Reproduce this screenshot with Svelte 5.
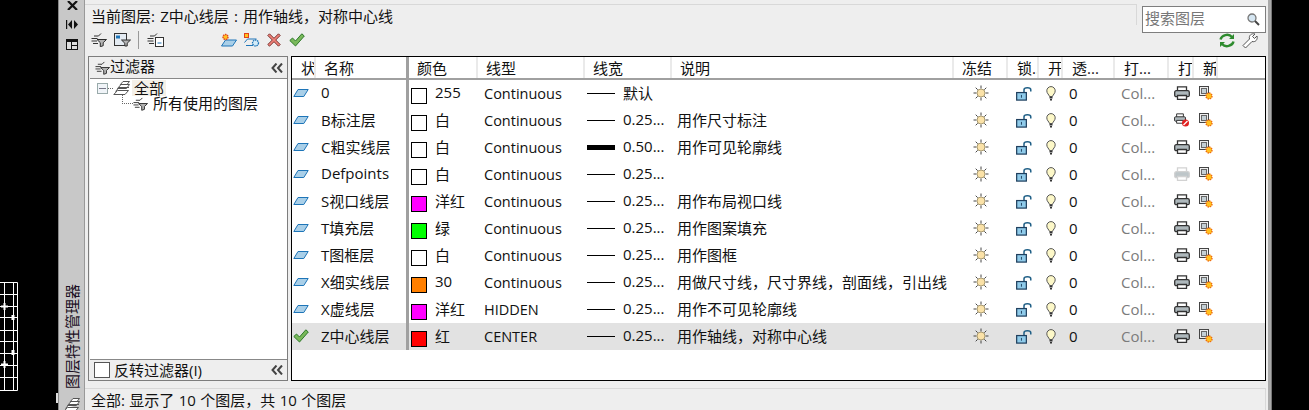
<script lang="ts">
  type Layer = {
    name: string;
    swatch: string;
    color: string;
    linetype: string;
    weight: string;
    thick?: boolean;
    desc: string;
    print?: "on" | "off" | "faded";
    active?: boolean;
  };

  const layers: Layer[] = [
    { name: "0", swatch: "#fff", color: "255", linetype: "Continuous", weight: "默认", desc: "" },
    { name: "B标注层", swatch: "#fff", color: "白", linetype: "Continuous", weight: "0.25...", desc: "用作尺寸标注", print: "off" },
    { name: "C粗实线层", swatch: "#fff", color: "白", linetype: "Continuous", weight: "0.50...", thick: true, desc: "用作可见轮廓线" },
    { name: "Defpoints", swatch: "#fff", color: "白", linetype: "Continuous", weight: "0.25...", desc: "", print: "faded" },
    { name: "S视口线层", swatch: "#ff00ff", color: "洋红", linetype: "Continuous", weight: "0.25...", desc: "用作布局视口线" },
    { name: "T填充层", swatch: "#00ff00", color: "绿", linetype: "Continuous", weight: "0.25...", desc: "用作图案填充" },
    { name: "T图框层", swatch: "#fff", color: "白", linetype: "Continuous", weight: "0.25...", desc: "用作图框" },
    { name: "X细实线层", swatch: "#ff7f00", color: "30", linetype: "Continuous", weight: "0.25...", desc: "用做尺寸线，尺寸界线，剖面线，引出线" },
    { name: "X虚线层", swatch: "#ff00ff", color: "洋红", linetype: "HIDDEN", weight: "0.25...", desc: "用作不可见轮廓线" },
    { name: "Z中心线层", swatch: "#ff0000", color: "红", linetype: "CENTER", weight: "0.25...", desc: "用作轴线，对称中心线", active: true },
  ];

  const headers = ["状", "名称", "颜色", "线型", "线宽", "说明", "冻结", "锁..", "开", "透...", "打...", "打", "新"];
</script>

<svg class="defs" width="0" height="0" aria-hidden="true">
  <symbol id="filter" viewBox="0 0 16 14">
    <path d="M.5 5.500h6M3 3h4.500l2.500-2.500M.5 8h5.500M2 10.500h5" fill="none" stroke="#333" />
    <path d="M6 6.500h9.500l-3.300 3.200v3l-2.900 1v-4z" fill="#b4b4b4" stroke="#2c2c2c" />
  </symbol>
  <symbol id="stack" viewBox="0 0 17 14">
    <path d="M.8 13.500 4.500 9.500h11l-3.500 4zM2.500 10.500l3.500-4h10M4.500 7.500 8 3.500h8.500l-3 4zM7 4l3-3.500h6.500l-2.500 3" fill="#fff" stroke="#555" />
  </symbol>
  <symbol id="layer" viewBox="0 0 16 8">
    <path d="M.8 7.500 5 .5h10.200l-4.400 7z" fill="#a9cfe8" stroke="#1e75b8" />
  </symbol>
  <symbol id="check" viewBox="0 0 16 14">
    <path d="M.8 7.500 3.500 5l3 3L12.800.8 15.300 3 6.500 13z" fill="#79b85a" stroke="#2e7a2b" />
  </symbol>
  <symbol id="sun" viewBox="0 0 16 16">
    <path d="M8 .5v3M8 12.500v3M.5 8h3M12.500 8h3M2.700 2.700l2 2M11.300 11.300l2 2M2.700 13.300l2-2M11.300 4.700l2-2" stroke="#444" />
    <circle cx="8" cy="8" r="4" fill="#fbe2a8" stroke="#a89a72" />
  </symbol>
  <symbol id="lock" viewBox="0 0 17 15">
    <path d="M8.500 6V3.500C8.500 .8 15.700 .8 15.700 3.500V5.500" fill="none" stroke="#1f5f86" stroke-width="1.600" />
    <rect x=".7" y="6.500" width="10.300" height="8" fill="#8fcbea" stroke="#1f3f5e" stroke-width="1.300" />
    <path d="M5.800 9v3" stroke="#1f3f5e" />
  </symbol>
  <symbol id="bulb" viewBox="0 0 10 15">
    <path d="M3.500 10.500C3 8.500.8 7.500.8 4.800a4.200 4.200 0 0 1 8.400 0c0 2.700-2.200 3.700-2.700 5.700z" fill="#fdf8c8" stroke="#555" />
    <path d="M3.500 11.800h3M4 13.800h2" stroke="#333" stroke-width="1.500" />
  </symbol>
  <symbol id="printer" viewBox="0 0 16 14">
    <path d="M3.500 5V.8h9V5" fill="#fff" stroke="currentColor" stroke-width="1.300" />
    <rect x=".7" y="4.700" width="14.600" height="6" rx="1.500" fill="#aeb8bc" stroke="currentColor" stroke-width="1.300" />
    <path d="M3.500 9.500v3.800h9V9.500z" fill="#fff" stroke="currentColor" stroke-width="1.300" />
  </symbol>
  <symbol id="newvp" viewBox="0 0 14 14">
    <rect x=".5" y=".5" width="9" height="9" fill="#eee" stroke="#444" />
    <rect x="2.500" y="2.500" width="5" height="5" fill="#c4d0d6" stroke="#666" />
    <circle cx="10" cy="10" r="3" fill="#ffc21f" stroke="#ef6c10" stroke-width="1.400" stroke-dasharray="1.500 .8" />
  </symbol>
  <symbol id="chev" viewBox="0 0 12 10">
    <path d="M5.500.5 1.500 5l4 4.500M11 .5 7 5l4 4.500" fill="none" stroke="#444" stroke-width="2" />
  </symbol>
</svg>

{#snippet icon(id: string, w: number, h: number)}
  <svg class="icon" width={w} height={h}><use href={"#" + id} /></svg>
{/snippet}

<div class="screen">
  <div class="canvas">
    <svg class="board" width="18" height="109" viewBox="0 0 18 109">
      <path d="M0 .5h17.500v108H0M0 12.500h17M0 24.500h17M0 35.500h17M0 48.500h17M0 59.500h17M0 71.500h17M0 83.500h17M0 95.500h17M4.500 0v108M13.500 0v108" fill="none" stroke="#fff" />
      <path d="M1 24.500h7M4.500 21v7M1 82.500h7M4.500 79v7" stroke="#fff" stroke-width="2" />
      <path d="M13 33v5M13 68v5" stroke="#fff" stroke-width="3" />
    </svg>
    <span class="mark"></span>
  </div>

  <div class="titlebar">
    <svg class="close" width="11" height="9" viewBox="0 0 11 9">
      <path d="M1 0l9 9M10 0 1 9" stroke="#111" stroke-width="2.200" />
    </svg>
    <svg class="autohide" width="12" height="9" viewBox="0 0 12 9">
      <path d="M.5 0v9" stroke="#111" stroke-width="1.400" />
      <path d="M6 0 2 4.500 6 9zM8 0l4 4.500L8 9z" fill="#111" />
    </svg>
    <svg class="props" width="12" height="11" viewBox="0 0 12 11">
      <path d="M0 0h12v11H0z" fill="#111" />
      <path d="M1 3h4v7H1zM6 3h5v3H6zM6 7h5v3H6z" fill="#ddd" />
    </svg>
    <div class="vtitle">图层特性管理器</div>
    <div class="vicon">{@render icon("stack", 17, 14)}</div>
  </div>

  <div class="panel">
    <div class="top">
      <div class="top-left">
        <div class="crumb">当前图层: Z中心线层 : 用作轴线，对称中心线</div>
        <div class="tools">
          {@render icon("filter", 16, 14)}
          <svg class="icon" width="17" height="14" viewBox="0 0 17 14">
            <rect x=".5" y=".5" width="12" height="12" fill="#e4ebf2" stroke="#333" />
            <path d="M2 2.500h4v3H2z" fill="#1e75b8" />
            <path d="M7.500 7h9l-3.300 3.200v2.800h-2.400v-2.800z" fill="#b4b4b4" stroke="#2c2c2c" />
          </svg>
          <span class="tool-sep"></span>
          <svg class="icon" width="17" height="14" viewBox="0 0 17 14">
            <path d="M.5 5.500h6M3 3h4.500l2.500-2.500M.5 8h6M2 10.500h5" fill="none" stroke="#333" />
            <rect x="8.500" y="4.500" width="8" height="9" fill="#fff" stroke="#333" />
            <path d="M10.500 10h4" stroke="#1e75b8" />
          </svg>
          <span class="tool-gap"></span>
          <svg class="icon" width="16" height="14" viewBox="0 0 16 14">
            <path d="M.5 13 4.500 7h11l-4 6z" fill="#a9cfe8" stroke="#1e75b8" />
            <circle cx="4.500" cy="4" r="2.500" fill="#ffc21f" stroke="#e2411c" stroke-width="1.400" stroke-dasharray="1.500 .7" />
          </svg>
          <svg class="icon" width="16" height="14" viewBox="0 0 16 14">
            <rect x=".5" y=".5" width="4" height="4" fill="#ffc21f" stroke="#e2411c" />
            <path d="M.5 9.500 3.500 6h9M2 12.500h7" fill="none" stroke="#1e75b8" />
            <circle cx="11.500" cy="10" r="3" fill="#d5ecf8" stroke="#1e75b8" stroke-width="1.300" stroke-dasharray="1.500 .7" />
          </svg>
          <svg class="icon" width="14" height="14" viewBox="0 0 14 14">
            <path d="M.8 2.500 2.500.8 7 5.300 11.500.8 13.200 2.500 8.700 7l4.500 4.500-1.700 1.700L7 8.700l-4.500 4.500L.8 11.500 5.300 7z" fill="#ef8078" stroke="#7a3632" />
          </svg>
          <span class="check">{@render icon("check", 16, 14)}</span>
        </div>
      </div>
      <div class="top-right">
        <div class="search">
          <span class="search-label">搜索图层</span>
          <svg width="13" height="13" viewBox="0 0 13 13">
            <circle cx="5" cy="5" r="4" fill="#d5e6f2" stroke="#777" stroke-width="1.300" />
            <path d="m8 8 4 4" stroke="#444" stroke-width="2" />
          </svg>
        </div>
        <div class="actions">
          <svg width="16" height="15" viewBox="0 0 16 15">
            <path d="M1.500 6.500C2.500 2 9.500 0 13 4M14.500 8.500C13.500 13 6.500 15 3 11" fill="none" stroke="#2e8b2e" stroke-width="2.400" />
            <path d="M15 1v5h-5zM1 14V9h5z" fill="#2e8b2e" />
          </svg>
          <svg width="16" height="16" viewBox="0 0 16 16">
            <path d="M1 12.500 7.500 6C6.500 2.500 9.500 0 13 1L10.500 3.500 12.500 5.500 15 3C16 6.500 13.500 9.500 10 8.500L3.500 15z" fill="#fff" stroke="#555" />
          </svg>
        </div>
      </div>
    </div>

    <div class="body">
      <div class="filters">
        <div class="filters-head">
          <span class="filters-title">{@render icon("filter", 15, 14)}<span class="raise">过滤器</span></span>
          {@render icon("chev", 12, 10)}
        </div>
        <div class="tree">
          <div class="tree-row">
            <span class="minus"></span>
            <span class="dots-h"></span>
            {@render icon("stack", 17, 14)}
            <span class="all">全部</span>
          </div>
          <div class="tree-row child">
            <span class="dots-l"></span>
            {@render icon("filter", 15, 14)}
            <span class="child-label">所有使用的图层</span>
          </div>
        </div>
        <div class="filters-foot">
          <span class="invert"><span class="box"></span>反转过滤器(I)</span>
          {@render icon("chev", 12, 10)}
        </div>
      </div>

      <div class="table">
        <div class="row head">
          {#each headers as h, i}
            <div class="hcell" class:split={i === 1}>{h}</div>
          {/each}
        </div>
        {#each layers as l}
          <div class="row item" class:active={l.active}>
            <div class="cell state">
              {#if l.active}{@render icon("check", 16, 14)}{:else}{@render icon("layer", 16, 8)}{/if}
            </div>
            <div class="cell name split">{l.name}</div>
            <div class="cell colour"><span class="swatch" style="background:{l.swatch}"></span>{l.color}</div>
            <div class="cell ltype">{l.linetype}</div>
            <div class="cell lw"><span class="line" class:thick={l.thick}></span>{l.weight}</div>
            <div class="cell desc">{l.desc}</div>
            <div class="cell c-center">{@render icon("sun", 16, 16)}</div>
            <div class="cell c-center">{@render icon("lock", 16, 15)}</div>
            <div class="cell c-center">{@render icon("bulb", 10, 15)}</div>
            <div class="cell transp">0</div>
            <div class="cell pstyle">Col...</div>
            <div class="cell c-center">
              {#if l.print === "off"}
                <svg class="icon dark" width="16" height="14" viewBox="0 0 16 14">
                  <use href="#printer" width="12" height="11" />
                  <circle cx="11.500" cy="10" r="3.500" fill="#e02020" />
                  <path d="m9.500 12 4-4" stroke="#fff" stroke-width="1.200" />
                </svg>
              {:else}
                <svg class="icon" class:dark={l.print !== "faded"} class:faded={l.print === "faded"} width="16" height="14"><use href="#printer" /></svg>
              {/if}
            </div>
            <div class="cell c-center">{@render icon("newvp", 14, 14)}</div>
            <div class="cell"></div>
          </div>
        {/each}
      </div>
    </div>

    <div class="status">全部: 显示了 10 个图层，共 10 个图层</div>
  </div>

  <div class="edge"></div>
</div>

<style>
  :global(body) {
    background: #000;
  }
  .defs {
    position: absolute;
  }
  .screen {
    width: 1309px;
    height: 410px;
    display: flex;
    overflow: hidden;
    background: #000;
    font-family: "Open Sans", "Noto Sans CJK SC", sans-serif;
    font-size: 15px;
    color: #111;
  }
  .icon {
    display: block;
    flex: none;
  }
  .canvas {
    width: 58px;
    flex: none;
    padding-top: 282px;
    box-sizing: border-box;
  }
  .board {
    display: block;
  }
  .mark {
    display: block;
    width: 2px;
    height: 10px;
    background: #ddd;
    margin: 2px 0 0 56px;
  }
  .titlebar {
    width: 27px;
    flex: none;
    box-sizing: border-box;
    background: #c8c8c8;
    border-left: 1px solid #888;
    border-right: 1px solid #999;
    display: flex;
    flex-direction: column;
    align-items: center;
    overflow: hidden;
  }
  .close {
    margin: 1px 0 0 1px;
  }
  .autohide {
    margin-top: 10px;
  }
  .props {
    margin-top: 10px;
  }
  .vtitle {
    margin-top: auto;
    writing-mode: vertical-rl;
    text-orientation: sideways;
    transform: rotate(180deg);
    font-size: 15px;
    line-height: 16px;
    color: #1c1024;
    white-space: nowrap;
  }
  .vicon {
    margin-top: 9px;
    height: 12px;
    flex: none;
  }
  .panel {
    width: 1183px;
    flex: none;
    box-sizing: border-box;
    background: #eeeeee;
    padding: 0 2px 0 3px;
    display: flex;
    flex-direction: column;
  }
  .edge {
    width: 4px;
    flex: none;
    background: #aaa;
    border-right: 1px solid #777;
    box-sizing: border-box;
  }
  .top {
    height: 56px;
    flex: none;
    display: flex;
    justify-content: space-between;
  }
  .top-left {
    flex: 1;
    display: flex;
    flex-direction: column;
    margin-top: 4px;
    margin-right: 5px;
    margin-left: -3px;
    padding-left: 3px;
    background: linear-gradient(#d8d8d8, #d8d8d8) top / 100% 1px no-repeat,
      linear-gradient(#d8d8d8, #d8d8d8) right top / 1px 21px no-repeat;
  }
  .crumb {
    padding: 2px 0 0 3px;
    height: 25px;
    line-height: 21px;
    box-sizing: border-box;
    white-space: nowrap;
    word-spacing: 1.3px;
  }
  .tools {
    display: flex;
    align-items: center;
    gap: 7px;
    padding: 0 0 0 3px;
    height: 22px;
  }
  .tool-sep {
    width: 1px;
    height: 18px;
    background: #999;
    margin-right: 1px;
  }
  .tool-gap {
    width: 43px;
  }
  .check {
    margin-left: 1px;
  }
  .top-right {
    width: 124px;
    flex: none;
    padding-top: 6px;
    display: flex;
    flex-direction: column;
    align-items: stretch;
  }
  .search {
    height: 27px;
    box-sizing: border-box;
    border: 1px solid #7e7e7e;
    background: #fff;
    color: #777;
    display: flex;
    align-items: center;
    justify-content: space-between;
    padding: 0 5px 0 2px;
  }
  .search-label {
    line-height: 21px;
    height: 23px;
  }
  .actions {
    display: flex;
    gap: 7px;
    padding-left: 77px;
  }
  .body {
    flex: none;
    height: 325px;
    display: flex;
    gap: 3px;
  }
  .filters {
    width: 200px;
    flex: none;
    box-sizing: border-box;
    border: 1px solid #7d7d7d;
    background: #eee;
    display: flex;
    flex-direction: column;
  }
  .filters-head,
  .filters-foot {
    display: flex;
    align-items: center;
    justify-content: space-between;
    flex: none;
    padding: 0 4px 0 6px;
  }
  .filters-head {
    height: 21px;
  }
  .filters-foot {
    height: 20px;
    padding-left: 5px;
  }
  .filters-title,
  .invert {
    display: flex;
    align-items: center;
    line-height: 18px;
  }
  .raise {
    height: 19px;
    line-height: 17px;
  }
  .box {
    width: 14px;
    height: 14px;
    border: 1px solid #555;
    background: #fff;
    margin-right: 4px;
  }
  .tree {
    flex: 1;
    background: #fff;
    margin: 0 0 0 1px;
    border-top: 1px solid #888;
    border-bottom: 1px solid #888;
  }
  .tree-row {
    display: flex;
    align-items: center;
    height: 16px;
    line-height: 16px;
    padding-left: 7px;
    margin-top: 1px;
  }
  .tree-row.child {
    margin-top: 0;
    padding-left: 32px;
  }
  .minus {
    width: 11px;
    height: 11px;
    box-sizing: border-box;
    border: 1px solid #9aa;
    background: linear-gradient(#778, #778) center / 7px 1px no-repeat, #f0f4f8;
  }
  .dots-h {
    width: 5px;
    border-top: 1px dotted #666;
  }
  .dots-l {
    width: 11px;
    height: 9px;
    margin-top: -9px;
    border-left: 1px dotted #666;
    border-bottom: 1px dotted #666;
    box-sizing: border-box;
  }
  .all {
    background: #f4f0e8;
    padding: 0 2px;
    margin-left: 2px;
  }
  .child-label {
    margin-left: 5px;
    height: 18px;
    line-height: 16px;
  }
  .table {
    flex: 1;
    min-width: 0;
    box-sizing: border-box;
    border: 1px solid #000;
    background: #fff;
  }
  .row {
    display: grid;
    grid-template-columns: 24px 93px 69px 107px 87px 282px 54px 31px 24px 52px 54px 25px 24px 1fr;
  }
  .head {
    height: 23px;
    box-sizing: border-box;
    border-bottom: 2px solid #a0a0a0;
  }
  .hcell {
    border-right: 2px solid #eaeaea;
    padding: 2px 0 0 9px;
    line-height: 19px;
    white-space: nowrap;
    overflow: hidden;
    box-sizing: border-box;
  }
  .hcell:nth-child(2),
  .hcell:nth-child(3),
  .hcell:nth-child(4),
  .hcell:nth-child(5),
  .hcell:nth-child(6),
  .hcell:nth-child(7) {
    padding-left: 8px;
  }
  .hcell.split {
    border-right: 3px solid #a0a0a0;
  }
  .item {
    height: 27px;
  }
  .item.active {
    background: #e2e2e2;
  }
  .cell {
    display: flex;
    align-items: center;
    white-space: nowrap;
    overflow: hidden;
    box-sizing: border-box;
    padding-bottom: 1px;
  }
  .c-center {
    justify-content: center;
  }
  .state {
    padding-left: 1px;
  }
  .name {
    padding: 0 0 3px 5px;
  }
  .cell.split {
    border-right: 3px solid #a0a0a0;
  }
  .colour {
    padding: 0 0 3px 2px;
  }
  .swatch {
    width: 14px;
    height: 14px;
    border: 1px solid #000;
    margin: 8px 8px 0 0;
    flex: none;
  }
  .ltype {
    padding-left: 6px;
    font-size: 14.5px;
  }
  .lw {
    padding: 0 0 3px 2px;
  }
  .line {
    width: 28px;
    height: 1px;
    background: #000;
    margin: 2px 8px 0 0;
    flex: none;
  }
  .line.thick {
    height: 5px;
  }
  .desc {
    padding: 0 0 3px 5px;
  }
  .transp {
    padding-left: 6px;
  }
  .pstyle {
    padding-left: 6px;
    color: #7b7b7b;
  }
  .dark {
    color: #333;
  }
  .faded {
    color: #c8c8c8;
    opacity: 0.8;
  }
  .status {
    margin-top: 7px;
    border-top: 1px solid #d8d8d8;
    border-right: 1px solid #d8d8d8;
    margin-left: -3px;
    padding: 1px 0 0 6px;
    line-height: 20px;
    word-spacing: 0.5px;
  }
</style>
